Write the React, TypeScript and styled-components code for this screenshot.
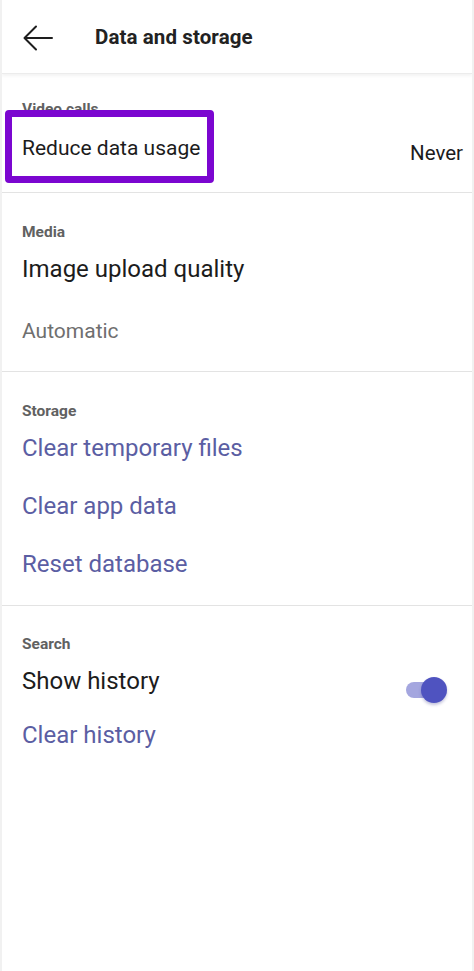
import React from "react";
import styled, { createGlobalStyle } from "styled-components";

const Global = createGlobalStyle`
  html, body { margin: 0; padding: 0; background: #ffffff; }
  body { font-family: Roboto, "Noto Sans", Arial, sans-serif; -webkit-font-smoothing: antialiased; }
  * { box-sizing: border-box; }
`;

const Screen = styled.div`
  width: 474px;
  height: 971px;
  background: #ffffff;
  border-left: 2px solid #f1f1f1;
  border-right: 2px solid #f1f1f1;
  overflow: hidden;
`;

const Header = styled.header`
  height: 74px;
  display: flex;
  align-items: center;
  padding-left: 20px;
  gap: 41px;
  border-bottom: 1px solid #ececec;
  box-shadow: 0 2px 3px rgba(0, 0, 0, 0.05);
  position: relative;
  z-index: 1;
`;

const BackButton = styled.div`
  width: 32px;
  height: 32px;
  display: flex;
  align-items: center;
  justify-content: center;
  margin-top: 2px;
`;

const Title = styled.h1`
  margin: 0;
  font-size: 20.5px;
  font-weight: 700;
  color: #222222;
  letter-spacing: 0.1px;
`;

const Section = styled.section<{ $top: number; $bottom: number; $divider?: boolean }>`
  position: relative;
  padding: ${(p) => p.$top}px 20px ${(p) => p.$bottom}px 20px;
  border-bottom: ${(p) => (p.$divider ? "1.5px solid #e3e3e3" : "none")};
`;

const Label = styled.div`
  font-size: 15.5px;
  line-height: 16px;
  font-weight: 700;
  color: #616161;
`;

const Row = styled.div<{ $h: number }>`
  height: ${(p) => p.$h}px;
  display: flex;
  align-items: center;
  justify-content: space-between;
`;

const Item = styled.div<{ $link?: boolean; $size?: number }>`
  font-size: ${(p) => p.$size ?? 24}px;
  color: ${(p) => (p.$link ? "#5b5ea3" : "#1c1c1c")};
`;

const Sub = styled.div`
  margin-top: 6px;
  height: 54px;
  display: flex;
  align-items: center;
  font-size: 21px;
  color: #6f6f6f;
`;

const Value = styled.div`
  font-size: 20.5px;
  color: #1c1c1c;
  margin-top: 10px;
  margin-right: -11px;
`;

const Highlight = styled.div`
  position: absolute;
  left: 3px;
  top: 36px;
  width: 209px;
  height: 73px;
  border: 7px solid #7b06d0;
  border-radius: 4px;
  pointer-events: none;
`;

const Toggle = styled.div`
  position: relative;
  width: 42px;
  height: 28px;
  margin-right: 4px;
  margin-top: 18px;
`;

const Track = styled.div`
  position: absolute;
  left: 0;
  top: 6px;
  width: 34px;
  height: 16px;
  border-radius: 8px;
  background: #a4a6df;
`;

const Thumb = styled.div`
  position: absolute;
  left: 15px;
  top: 1px;
  width: 26px;
  height: 26px;
  border-radius: 50%;
  background: #4f53c0;
  box-shadow: 0 2px 3px rgba(60, 60, 140, 0.3);
`;

export default function App() {
  return (
    <>
      <Global />
      <Screen>
        <Header>
          <BackButton>
            <svg width="30" height="26" viewBox="0 0 30 26" fill="none">
              <path d="M29 13H2M13 1.5L1.5 13L13 24.5" stroke="#1e1e1e" strokeWidth="2" strokeLinecap="round" strokeLinejoin="round" />
            </svg>
          </BackButton>
          <Title>Data and storage</Title>
        </Header>

        <Section $top={27} $bottom={13} $divider>
          <Label>Video calls</Label>
          <Row $h={62}>
            <Item $size={21}>Reduce data usage</Item>
            <Value>Never</Value>
          </Row>
          <Highlight />
        </Section>

        <Section $top={31} $bottom={13} $divider>
          <Label>Media</Label>
          <Row $h={58}>
            <Item>Image upload quality</Item>
          </Row>
          <Sub>Automatic</Sub>
        </Section>

        <Section $top={31} $bottom={12} $divider>
          <Label>Storage</Label>
          <Row $h={58}>
            <Item $link>Clear temporary files</Item>
          </Row>
          <Row $h={58}>
            <Item $link>Clear app data</Item>
          </Row>
          <Row $h={58}>
            <Item $link>Reset database</Item>
          </Row>
        </Section>

        <Section $top={30} $bottom={0}>
          <Label>Search</Label>
          <Row $h={58}>
            <Item>Show history</Item>
            <Toggle>
              <Track />
              <Thumb />
            </Toggle>
          </Row>
          <Row $h={50}>
            <Item $link>Clear history</Item>
          </Row>
        </Section>
      </Screen>
    </>
  );
}
